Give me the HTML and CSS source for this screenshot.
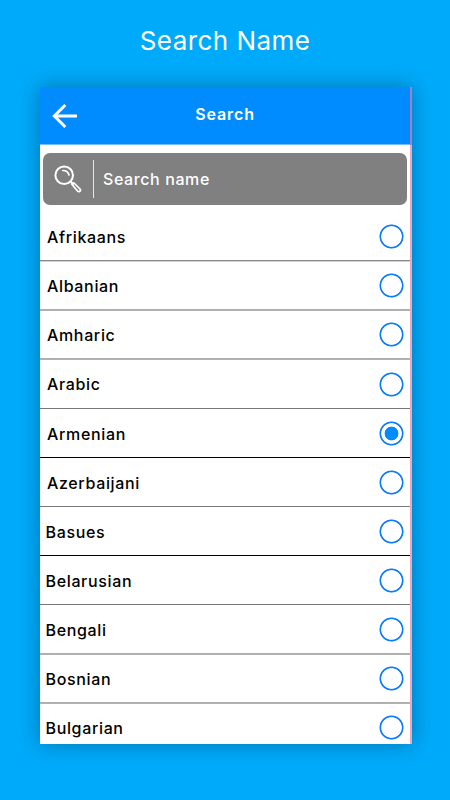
FILE: index.html
```html
<!DOCTYPE html>
<html lang="en">
<head>
  <meta charset="UTF-8">
  <title>Search Name</title>
  <link rel="stylesheet" href="styles.css">
</head>
<body>

  <h1 class="title">Search Name</h1>

  <div class="phone">
    <div class="screen">
      <header class="header">
        <svg class="back" viewBox="0 0 26 26" fill="none" stroke="#fff" stroke-width="3">
          <path d="M13.3 2L2.3 13L13.3 24M2.5 13H25"/>
        </svg>
        <h2>Search</h2>
      </header>

      <div class="search">
        <svg class="glass" viewBox="0 0 28 28" fill="none" stroke="#fff" stroke-linecap="round" stroke-linejoin="round">
          <circle cx="10.2" cy="10.2" r="8.8" stroke-width="2"/>
          <path d="M8.8 5.5Q13.8 5.4 15 10" stroke-width="1.7"/>
          <path d="M16.5 16.5L19 19" stroke-width="2"/>
          <path d="M18 19.5Q17.7 17.8 20 18L26 24Q27 25.5 25.8 26.2Q24.7 27 23.3 25.8Z" stroke-width="1.7"/>
        </svg>
        <span class="search-text">Search name</span>
      </div>

      <ul class="list">
        <li class="row line-soft">Afrikaans<span class="radio"></span></li>
        <li class="row line-wide">Albanian<span class="radio"></span></li>
        <li class="row line-wide">Amharic<span class="radio"></span></li>
        <li class="row tall">Arabic<span class="radio"></span></li>
        <li class="row line-dark">Armenian<span class="radio checked"></span></li>
        <li class="row">Azerbaijani<span class="radio"></span></li>
        <li class="row line-dark b">Basues<span class="radio"></span></li>
        <li class="row b">Belarusian<span class="radio"></span></li>
        <li class="row line-wide b">Bengali<span class="radio"></span></li>
        <li class="row line-wide b">Bosnian<span class="radio"></span></li>
        <li class="row b">Bulgarian<span class="radio"></span></li>
      </ul>
    </div>
    <div class="edge"></div>
  </div>

</body>
</html>
```

FILE: styles.css
```css
* {
  box-sizing: border-box;
}
body {
  margin: 0;
  height: 800px;
  overflow: hidden;
  background: #00aafa;
  font-family: Inter, "Open Sans", sans-serif;
}
.title {
  margin: 0;
  height: 87px;
  padding-top: 25px;
  text-align: center;
  font-size: 26px;
  line-height: 32px;
  font-weight: 400;
  letter-spacing: 0.45px;
  color: #fff;
}
.phone {
  display: flex;
  width: 372px;
  height: 657px;
  margin-left: 40px;
  overflow: hidden;
  box-shadow: 0 0 20px rgba(0, 40, 70, 0.4);
}
.screen {
  width: 370px;
  background: #fff;
}
.edge {
  width: 2px;
  background: linear-gradient(#a77bd0 58px, #f3a5bd 58px);
}
.header {
  display: grid;
  grid-template-columns: 50px 1fr 50px;
  align-items: center;
  height: 58px;
  background: #008cff;
  border-bottom: 1px solid #72bcff;
}
.header h2 {
  margin: 0;
  padding-bottom: 3px;
  text-align: center;
  font-size: 16px;
  font-weight: 600;
  letter-spacing: 0.9px;
  color: #fff;
}
.back {
  width: 26px;
  height: 26px;
  margin-left: 11.5px;
}
.search {
  display: flex;
  align-items: center;
  height: 52px;
  margin: 8px 3px 7px;
  padding-left: 11px;
  background: #808080;
  border-radius: 7px;
}
.glass {
  width: 28px;
  height: 28px;
}
.search-text {
  margin-left: 11px;
  padding-left: 9px;
  border-left: 1px solid #e6e6e6;
  font-size: 16px;
  line-height: 38px;
  font-weight: 500;
  letter-spacing: 0.6px;
  color: #fff;
}
.list {
  margin: 0;
  padding: 0;
  list-style: none;
}
.row {
  display: flex;
  align-items: center;
  justify-content: space-between;
  height: 49px;
  padding: 1px 6px 0 7px;
  border-bottom: 1px solid #777;
  font-size: 16px;
  font-weight: 500;
  letter-spacing: 0.65px;
  color: #000;
}
.row.b {
  padding-left: 5.5px;
}
.tall {
  height: 50px;
}
/* separators */
.line-dark {
  border-color: #000;
}
.line-soft {
  border-color: #888;
  box-shadow: 0 1px #d4d4d4;
}
.line-wide {
  border-color: #adadad;
  box-shadow: 0 1px #b2b2b2;
}
.radio {
  width: 25px;
  height: 25px;
  background: radial-gradient(circle, transparent 9.9px, #0a7dff 10.7px, #0a7dff 11.6px, transparent 12.4px);
}
.checked {
  background: radial-gradient(circle, #008cff 6.6px, transparent 7.2px, transparent 9.9px, #0a7dff 10.7px, #0a7dff 11.6px, transparent 12.4px);
}
```
